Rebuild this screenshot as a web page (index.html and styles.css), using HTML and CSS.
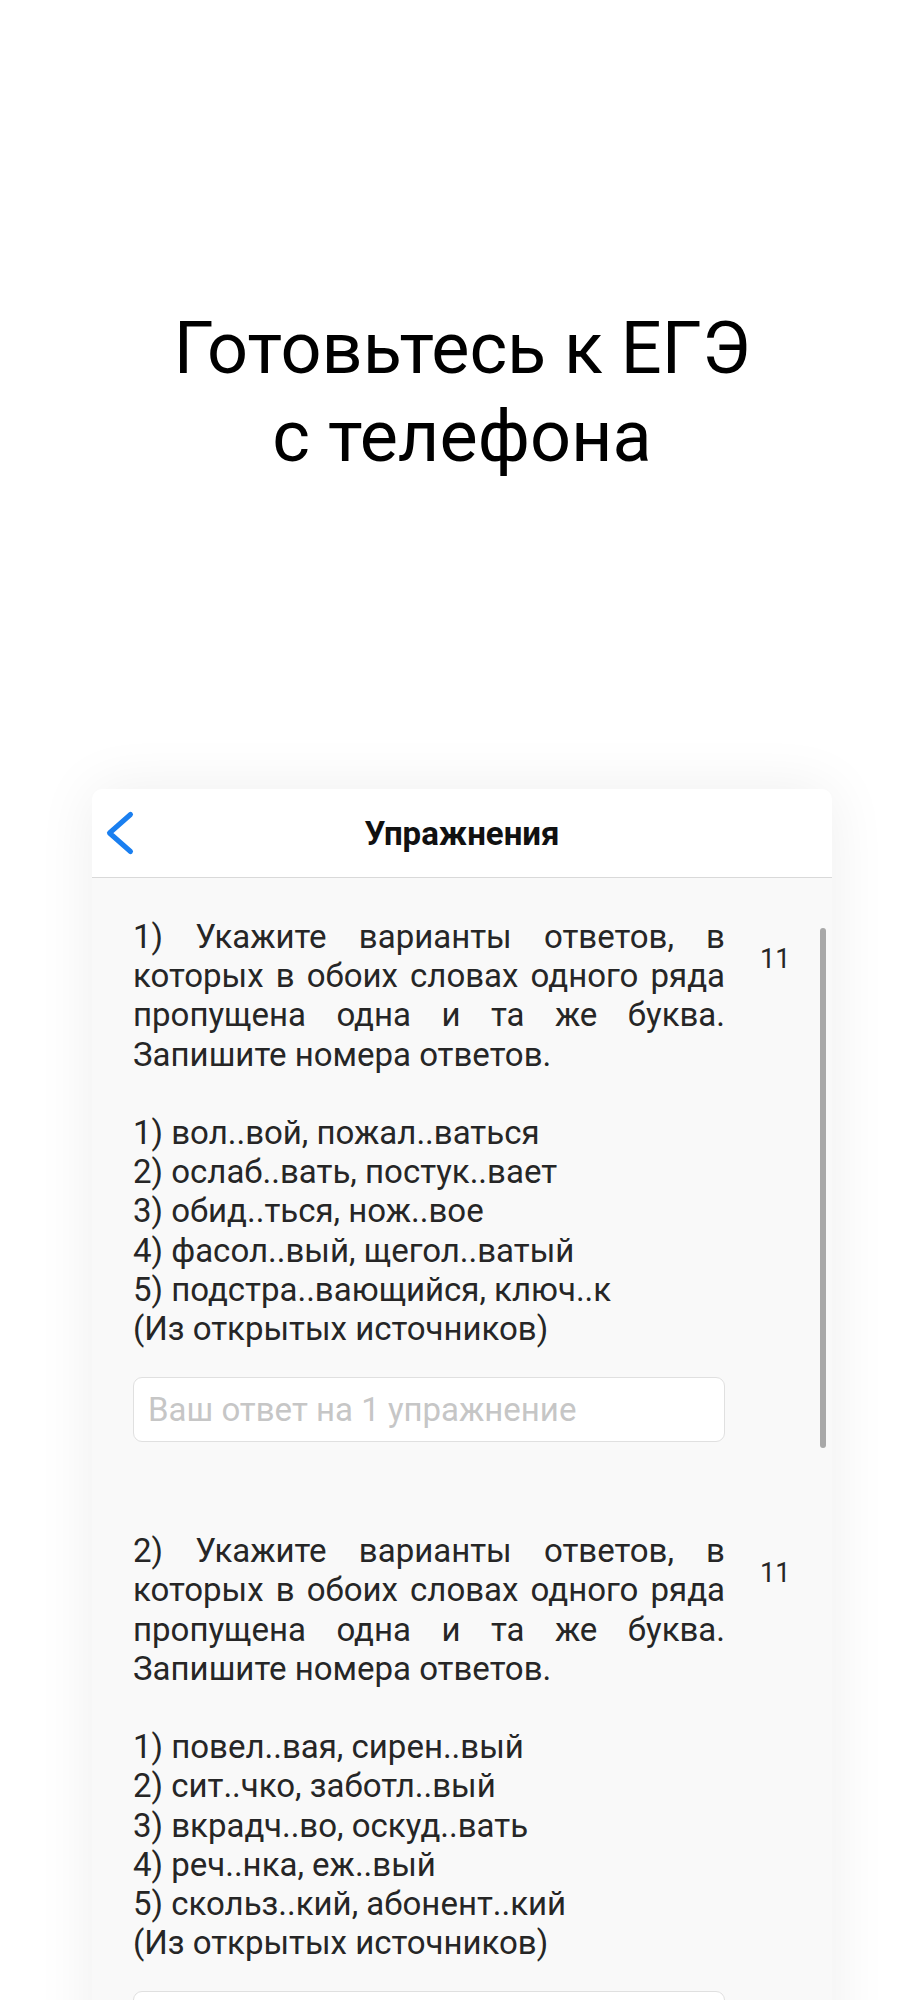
FILE: index.html
```html
<!DOCTYPE html>
<html lang="ru">
<head>
    <meta charset="UTF-8">
    <meta name="viewport" content="width=device-width, initial-scale=1.0">
    <title>Готовьтесь к ЕГЭ</title>
    <link rel="stylesheet" href="styles.css">
</head>
<body>

    <!-- Заголовок -->
    <div class="hero">
        <h1>Готовьтесь к ЕГЭ<br>с телефона</h1>
    </div>

    <!-- Экран приложения -->
    <div class="phone-card">
        <div class="nav-bar">
            <a class="back-btn" href="#">
                <svg width="30" height="46" viewBox="0 0 30 46">
                    <polyline points="25.5,4.5 4.5,23 25.5,41.5" fill="none" stroke="#1a7ff0" stroke-width="5" stroke-linecap="round" stroke-linejoin="round"/>
                </svg>
            </a>
            <div class="nav-title">Упражнения</div>
            <div></div>
        </div>

        <div class="exercise-list">
            <div class="scroll-thumb"></div>

            <div class="exercise">
                <div class="exercise-main">
                    <p class="exercise-text">1) Укажите варианты ответов, в которых в обоих словах одного ряда пропущена одна и та же буква. Запишите номера ответов.

1) вол..вой, пожал..ваться
2) ослаб..вать, постук..вает
3) обид..ться, нож..вое
4) фасол..вый, щегол..ватый
5) подстра..вающийся, ключ..к
(Из открытых источников)</p>
                    <input class="answer-input" type="text" placeholder="Ваш ответ на 1 упражнение">
                </div>
                <div class="exercise-num">11</div>
            </div>

            <div class="exercise">
                <div class="exercise-main">
                    <p class="exercise-text">2) Укажите варианты ответов, в которых в обоих словах одного ряда пропущена одна и та же буква. Запишите номера ответов.

1) повел..вая, сирен..вый
2) сит..чко, заботл..вый
3) вкрадч..во, оскуд..вать
4) реч..нка, еж..вый
5) скольз..кий, абонент..кий
(Из открытых источников)</p>
                    <input class="answer-input" type="text" placeholder="Ваш ответ на 2 упражнение">
                </div>
                <div class="exercise-num">11</div>
            </div>
        </div>
    </div>

</body>
</html>
```

FILE: styles.css
```css
body {
    font-family: Roboto, "Noto Sans", Arial, sans-serif;
    background-color: #fff;
    margin: 0;
    padding: 0;
}

.hero {
    padding-top: 305px;
    padding-bottom: 308px;
    text-align: center;
}

.hero h1 {
    margin: 0;
    font-size: 72px;
    font-weight: 400;
    line-height: 88px;
    color: #000;
}

.phone-card {
    width: 740px;
    margin: 0 auto;
    background-color: #f9f9f9;
    border-radius: 10px;
    box-shadow: 0 0 60px rgba(0, 0, 0, 0.07);
    overflow: hidden;
}

.nav-bar {
    display: grid;
    grid-template-columns: 1fr auto 1fr;
    align-items: center;
    height: 88px;
    padding: 0 13px;
    background-color: #fff;
    border-bottom: 1px solid #d9d9d9;
}

.back-btn {
    display: flex;
    width: 30px;
}

.nav-title {
    font-size: 33px;
    font-weight: 700;
    color: #111;
}

.exercise-list {
    position: relative;
    padding: 39px 0 0 41px;
}

.scroll-thumb {
    position: absolute;
    right: 6px;
    top: 50px;
    width: 6px;
    height: 520px;
    border-radius: 3px;
    background-color: #a8a8a8;
}

.exercise {
    display: flex;
    align-items: flex-start;
    margin-bottom: 89px;
}

.exercise-main {
    width: 592px;
}

.exercise-text {
    margin: 0;
    font-size: 33px;
    line-height: 39.2px;
    color: #262626;
    white-space: pre-line;
    text-align: justify;
}

.answer-input {
    display: block;
    box-sizing: border-box;
    width: 100%;
    height: 65px;
    margin-top: 29px;
    padding: 0 14px;
    border: 1.5px solid #e0e0e0;
    border-radius: 9px;
    background-color: #fff;
    font-family: inherit;
    font-size: 33px;
    color: #222;
}

.answer-input::placeholder {
    color: #c6c6c6;
}

.exercise-num {
    margin-left: 35px;
    margin-top: 29px;
    font-size: 27px;
    line-height: 1;
    color: #262626;
}
```
